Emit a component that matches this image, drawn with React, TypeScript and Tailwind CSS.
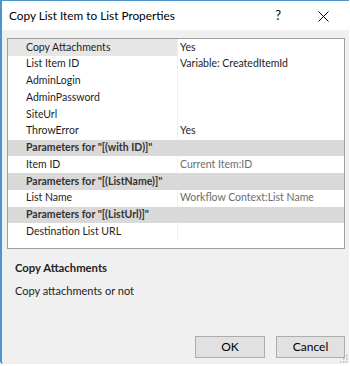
import React from "react";

type Row =
  | { kind: "prop"; name: string; value?: string; muted?: boolean; selected?: boolean }
  | { kind: "cat"; name: string };

const rows: Row[] = [
  { kind: "prop", name: "Copy Attachments", value: "Yes", selected: true },
  { kind: "prop", name: "List Item ID", value: "Variable: CreatedItemId" },
  { kind: "prop", name: "AdminLogin" },
  { kind: "prop", name: "AdminPassword" },
  { kind: "prop", name: "SiteUrl" },
  { kind: "prop", name: "ThrowError", value: "Yes" },
  { kind: "cat", name: 'Parameters for "[(with ID)]"' },
  { kind: "prop", name: "Item ID", value: "Current Item:ID", muted: true },
  { kind: "cat", name: 'Parameters for "[(ListName)]"' },
  { kind: "prop", name: "List Name", value: "Workflow Context:List Name", muted: true },
  { kind: "cat", name: 'Parameters for "[(ListUrl)]"' },
  { kind: "prop", name: "Destination List URL" },
];

const font = { fontFamily: 'Lato, "Noto Sans", sans-serif' };

function GridRow({ row }: { row: Row }) {
  if (row.kind === "cat") {
    return (
      <div className="flex h-[16.75px] items-center bg-[#d9d9d9] pl-[18px] text-[10.5px] font-bold text-[#333]">
        {row.name}
      </div>
    );
  }
  return (
    <div className="flex h-[16.75px] items-center text-[10.5px]">
      <div
        className={`flex h-full w-[169px] items-center pl-[18px] text-[#1e1e1e] ${
          row.selected ? "bg-[#e6e6e6]" : "bg-white"
        }`}
      >
        {row.name}
      </div>
      <div
        className={`flex h-full flex-1 items-center border-l border-[#f0f0f0] pl-[2px] ${
          row.muted ? "text-[#6d6d6d]" : "text-[#1e1e1e]"
        }`}
      >
        {row.value}
      </div>
    </div>
  );
}

// little dotted resize grip in the corner
function Grip() {
  const dots = [
    [8, 2],
    [5, 5],
    [8, 5],
    [2, 8],
    [5, 8],
    [8, 8],
  ];
  return (
    <svg width="10" height="10" viewBox="0 0 10 10" className="absolute bottom-[1px] right-[1px]">
      {dots.map(([x, y], i) => (
        <rect key={i} x={x} y={y} width="1.5" height="1.5" fill="#b8b8b8" />
      ))}
    </svg>
  );
}

export default function App() {
  return (
    <div className="h-[366px] w-[350px] overflow-hidden bg-white" style={font}>
      <div className="relative flex h-[364px] w-[349px] flex-col rounded-b-[3px] border-t border-l-2 border-[#4d93cf] bg-[#f0f0f0]">
        {/* title bar */}
        <div className="flex h-[29px] shrink-0 items-center bg-white pl-[7px] pr-[20px] text-[11.8px] text-black">
          <span>Copy List Item to List Properties</span>
          <span className="ml-auto mr-[37px] text-[13px]">?</span>
          <svg width="11" height="11" viewBox="0 0 11 11" className="mt-[1px]">
            <path d="M0.5 0.5 L10.5 10.5 M10.5 0.5 L0.5 10.5" stroke="#000" strokeWidth="1" />
          </svg>
        </div>

        {/* property grid */}
        <div className="ml-[5px] mt-[8px] h-[211px] w-[338px] border border-[#a0a0a0] bg-white">
          {rows.map((row, i) => (
            <GridRow key={i} row={row} />
          ))}
        </div>

        {/* description */}
        <div className="ml-[13px] mt-[11px] text-[11.3px] font-bold text-[#1e1e1e]">Copy Attachments</div>
        <div className="ml-[13px] mt-[6px] text-[11px] text-[#1e1e1e]">Copy attachments or not</div>

        {/* buttons */}
        <div className="mt-auto mb-[6px] flex justify-end gap-[11px] pr-[4px]">
          <button className="h-[22px] w-[70px] border border-[#adadad] bg-[#e1e1e1] text-[12px] text-black">OK</button>
          <button className="h-[22px] w-[69px] border border-[#adadad] bg-[#e1e1e1] text-[12px] text-black">Cancel</button>
        </div>

        <Grip />
      </div>
    </div>
  );
}
